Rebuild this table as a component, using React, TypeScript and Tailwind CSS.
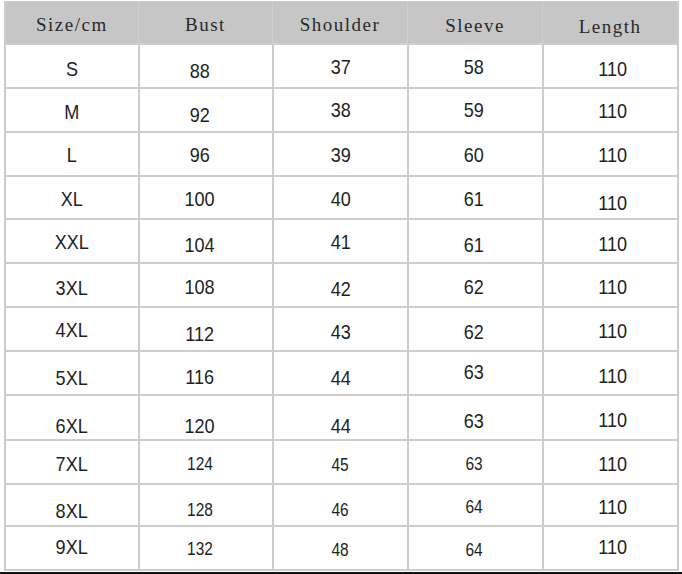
import React from "react";

type Cell = [string, number];

const rows: { h: number; cells: Cell[]; small?: boolean }[] = [
  { h: 44, cells: [["S", 3], ["88", 5], ["37", 1], ["58", 1], ["110", 3]] },
  { h: 44, cells: [["M", 2], ["92", 5], ["38", 0], ["59", 0], ["110", 1]] },
  { h: 44, cells: [["L", 1], ["96", 1], ["39", 1], ["60", 1], ["110", 1]] },
  { h: 43, cells: [["XL", 1], ["100", 1], ["40", 1], ["61", 1], ["110", 5]] },
  { h: 44, cells: [["XXL", 1], ["104", 4], ["41", 1], ["61", 4], ["110", 3]] },
  { h: 44, cells: [["3XL", 3], ["108", 2], ["42", 4], ["62", 2], ["110", 2]] },
  { h: 44, cells: [["4XL", 1], ["112", 5], ["43", 3], ["62", 3], ["110", 2]] },
  { h: 44, cells: [["5XL", 5], ["116", 4], ["44", 5], ["63", -1], ["110", 3]] },
  { h: 45, cells: [["6XL", 8], ["120", 8], ["44", 8], ["63", 3], ["110", 2]] },
  { h: 44, cells: [["7XL", 2], ["124", 2], ["45", 3], ["63", 2], ["110", 2]], small: true },
  { h: 42, cells: [["8XL", 6], ["128", 5], ["46", 5], ["64", 2], ["110", 2]], small: true },
  { h: 44, cells: [["9XL", -1], ["132", 1], ["48", 2], ["64", 2], ["110", -1]], small: true },
];

const widths = ["w-[132px]", "w-[135px]", "w-[135px]", "w-[136px]", "w-[135px]"];
const xShift = [0, -6, 0, -2, 2];
const headers = ["Size/cm", "Bust", "Shoulder", "Sleeve", "Length"];
const headerDy = [3, 3, 3, 4, 5];

export default function App() {
  return (
    <div className="w-[682px] h-[574px] bg-white relative overflow-hidden">
      <div className="pl-[4px] pt-[1px]">
        <div className="w-[675px] border-l-2 border-r-2 border-[#cccccc]">
          <div className="flex h-[44px] bg-[#c6c6c6] border-b-2 border-[#cfcfcf]">
            {headers.map((t, i) => (
              <div
                key={t}
                className={`${widths[i]} flex items-center justify-center ${i > 0 ? "border-l border-[#d0d0d0]" : ""}`}
              >
                <span
                  className="text-[19px] tracking-[1.5px] text-[#2a2a2a]"
                  style={{ fontFamily: '"Liberation Serif", "DejaVu Serif", serif', transform: `translateY(${headerDy[i]}px)` }}
                >
                  {t}
                </span>
              </div>
            ))}
          </div>
          {rows.map((r, ri) => (
            <div key={ri} className="flex border-b-2 border-[#cdcdcd]" style={{ height: r.h }}>
              {r.cells.map(([t, dy], ci) => (
                <div
                  key={ci}
                  className={`${widths[ci]} flex items-center justify-center ${ci > 0 ? "border-l-2 border-[#cdcdcd]" : ""}`}
                >
                  <span
                    className={`inline-block text-[#1f1f1f] ${r.small && ci > 0 && ci < 4 ? "text-[18px]" : "text-[21px]"}`}
                    style={{
                      fontFamily: '"Liberation Sans", Arial, sans-serif',
                      transform: `translate(${xShift[ci]}px, ${dy}px) scaleX(0.86)`,
                    }}
                  >
                    {t}
                  </span>
                </div>
              ))}
            </div>
          ))}
        </div>
      </div>
      <div className="absolute left-0 bottom-0 w-full h-[2px] bg-[#111111]" />
    </div>
  );
}
